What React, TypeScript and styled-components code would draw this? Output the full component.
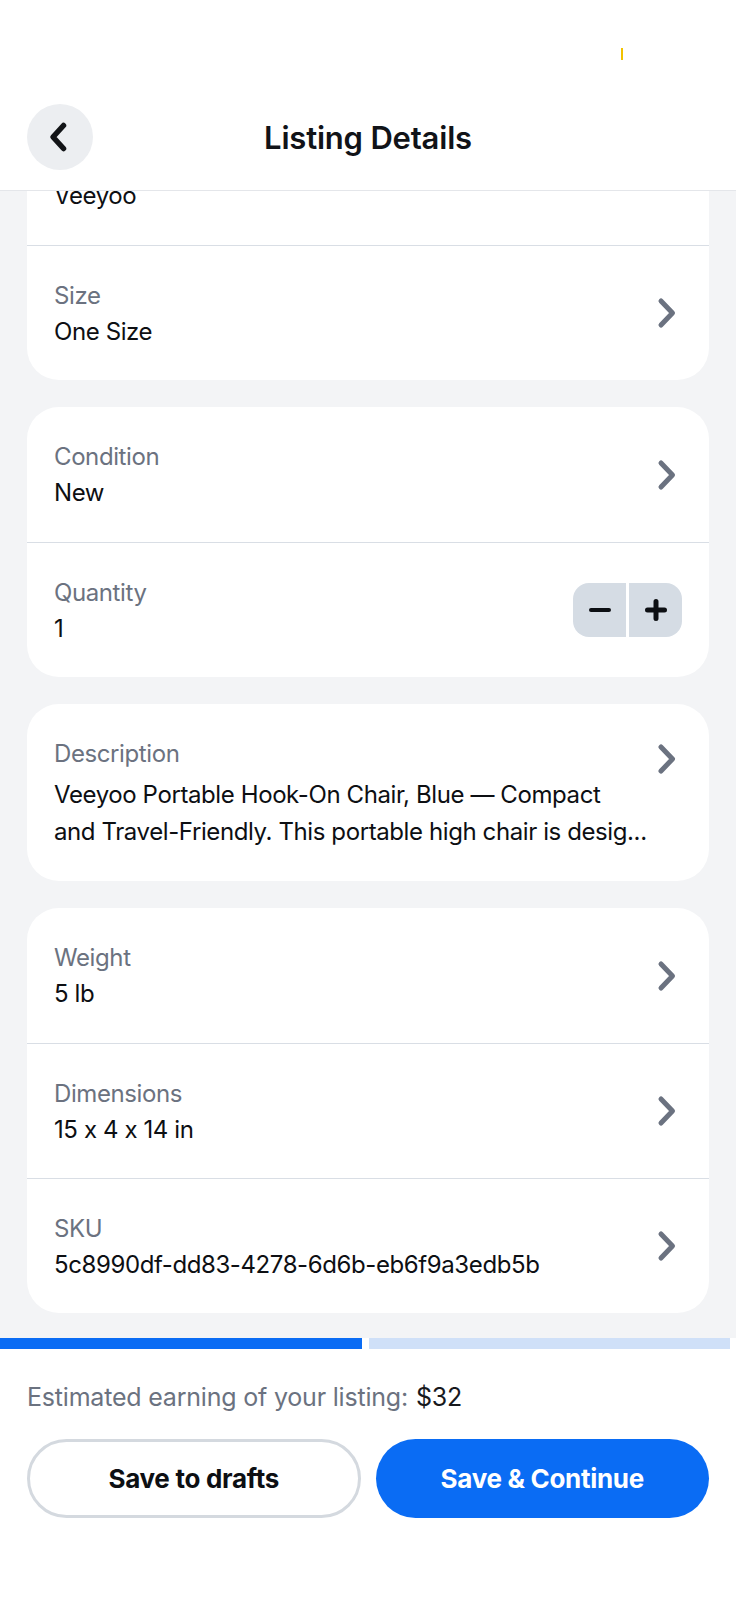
import styled, { createGlobalStyle } from 'styled-components';

const GlobalStyle = createGlobalStyle`
  html, body {
    margin: 0;
    padding: 0;
    background: #ffffff;
  }
  body {
    font-family: Inter, "Noto Sans", "Liberation Sans", sans-serif;
    font-feature-settings: "calt" 0;
    -webkit-font-smoothing: antialiased;
  }
  * { box-sizing: border-box; }
`;

const ScPage = styled.div`
  width: 736px;
  height: 1600px;
  display: flex;
  flex-direction: column;
  background-color: #f3f4f6;
  overflow: hidden;
`;

const ScHeader = styled.header`
  flex: 0 0 191px;
  display: flex;
  flex-direction: column;
  background-color: #ffffff;
  border-bottom: 1px solid #e4e6ea;
  position: relative;
  z-index: 2;
`;

const ScStatusBar = styled.div`
  height: 104px;
  display: flex;
  justify-content: flex-end;
  padding: 48px 113px 0 0;
`;

const ScStatusMark = styled.span`
  width: 2px;
  height: 12px;
  background-color: #f2c200;
`;

const ScNavBar = styled.div`
  display: grid;
  grid-template-columns: 66px 1fr 66px;
  align-items: center;
  padding: 0 27px;
`;

const ScBackButton = styled.button`
  width: 66px;
  height: 66px;
  border: 0;
  padding: 0;
  border-radius: 50%;
  background-color: #eceef1;
  display: flex;
  align-items: center;
  justify-content: center;
  padding-right: 4px;
`;

const ScTitle = styled.h1`
  margin: 0;
  text-align: center;
  font-size: 31px;
  font-weight: 600;
  color: #111318;
  letter-spacing: -0.2px;
`;

const ScScroll = styled.main`
  flex: 1 1 auto;
  overflow: hidden;
`;

const ScList = styled.div`
  margin-top: -81px;
  padding: 0 27px 27px;
  display: flex;
  flex-direction: column;
  gap: 27px;
`;

const ScCard = styled.section`
  background-color: #ffffff;
  border-radius: 32px;
  overflow: hidden;
`;

const ScRow = styled.div<{ $top?: boolean }>`
  display: flex;
  align-items: ${(p) => (p.$top ? 'flex-start' : 'center')};
  justify-content: space-between;
  gap: 20px;
  min-height: 135px;
  padding: ${(p) => (p.$top ? '32px 27px 31px 27px' : '0 27px 0 27px')};

  & + & {
    border-top: 1px solid #d9dee5;
  }
`;

const ScText = styled.div`
  display: flex;
  flex-direction: column;
  min-width: 0;
  letter-spacing: -0.4px;
`;

const ScLabel = styled.div`
  font-size: 24px;
  line-height: 36px;
  color: #6b7280;
`;

const ScValue = styled.div<{ $multi?: boolean }>`
  font-size: 24px;
  line-height: ${(p) => (p.$multi ? '37px' : '35px')};
  margin-top: ${(p) => (p.$multi ? '4px' : '0')};
  color: #0d0f13;
  white-space: nowrap;
`;

const ScChevron = styled.svg<{ $top?: boolean }>`
  flex: 0 0 auto;
  margin-right: 5px;
  margin-top: ${(p) => (p.$top ? '7px' : '0')};
`;

const ScStepper = styled.div`
  display: flex;
  gap: 3px;
`;

const ScStepButton = styled.button<{ $side: 'left' | 'right' }>`
  width: 53px;
  height: 54px;
  border: 0;
  padding: 0;
  background-color: #d5dce4;
  display: flex;
  align-items: center;
  justify-content: center;
  border-radius: ${(p) => (p.$side === 'left' ? '16px 0 0 16px' : '0 16px 16px 0')};
`;

const ScFooter = styled.footer`
  flex: 0 0 262px;
  background-color: #ffffff;
  display: flex;
  flex-direction: column;
`;

const ScProgress = styled.div`
  display: flex;
  gap: 7px;
  padding-right: 6px;
  height: 11px;
`;

const ScProgressPart = styled.div<{ $done?: boolean }>`
  flex: 1;
  background-color: ${(p) => (p.$done ? '#0a6cf4' : '#cfe0f8')};
`;

const ScEarning = styled.div`
  margin: 32px 27px 0;
  font-size: 25px;
  line-height: 32px;
  letter-spacing: -0.2px;
  color: #6b7280;

  > strong {
    font-weight: 400;
    color: #17191d;
    margin-left: 8px;
  }
`;

const ScActions = styled.div`
  display: grid;
  grid-template-columns: 1fr 1fr;
  gap: 15px;
  margin: 26px 27px 0;
`;

const ScActionButton = styled.button<{ $primary?: boolean }>`
  height: 79px;
  border-radius: 40px;
  font-family: inherit;
  font-size: 26px;
  font-weight: 700;
  letter-spacing: -0.3px;
  color: ${(p) => (p.$primary ? '#ffffff' : '#0d0f13')};
  background-color: ${(p) => (p.$primary ? '#0a6cf4' : '#ffffff')};
  border: ${(p) => (p.$primary ? '0' : '3px solid #d4d9df')};
`;

const Chevron = ({ top }: { top?: boolean }) => (
  <ScChevron $top={top} width="20" height="32" viewBox="0 0 20 32" fill="none">
    <path d="M4 4 L15.5 16 L4 28" stroke="#6b7280" strokeWidth="5" strokeLinecap="round" strokeLinejoin="round" />
  </ScChevron>
);

type Field = { label: string; value: string; link?: boolean };

const DetailRow = ({ label, value, link = true }: Field) => (
  <ScRow>
    <ScText>
      <ScLabel>{label}</ScLabel>
      <ScValue>{value}</ScValue>
    </ScText>
    {link && <Chevron />}
  </ScRow>
);

// brand row sits mostly under the header, only its value peeks out
const firstCard: Field[] = [
  { label: 'Brand', value: 'Veeyoo', link: false },
  { label: 'Size', value: 'One Size' },
];

const shippingCard: Field[] = [
  { label: 'Weight', value: '5 lb' },
  { label: 'Dimensions', value: '15 x 4 x 14 in' },
  { label: 'SKU', value: '5c8990df-dd83-4278-6d6b-eb6f9a3edb5b' },
];

export const App = () => {
  return (
    <ScPage>
      <GlobalStyle />
      <ScHeader>
        <ScStatusBar>
          <ScStatusMark />
        </ScStatusBar>
        <ScNavBar>
          <ScBackButton aria-label="Back">
            <svg width="22" height="32" viewBox="0 0 22 32" fill="none">
              <path d="M16.5 4.5 L6 16 L16.5 27.5" stroke="#121417" strokeWidth="5.5" strokeLinecap="round" strokeLinejoin="round" />
            </svg>
          </ScBackButton>
          <ScTitle>Listing Details</ScTitle>
          <span />
        </ScNavBar>
      </ScHeader>

      <ScScroll>
        <ScList>
          <ScCard>
            {firstCard.map((f) => (
              <DetailRow key={f.label} {...f} />
            ))}
          </ScCard>

          <ScCard>
            <DetailRow label="Condition" value="New" />
            <ScRow>
              <ScText>
                <ScLabel>Quantity</ScLabel>
                <ScValue>1</ScValue>
              </ScText>
              <ScStepper>
                <ScStepButton $side="left" aria-label="Decrease">
                  <svg width="22" height="22" viewBox="0 0 22 22">
                    <path d="M2 11 H20" stroke="#0d0f13" strokeWidth="4" strokeLinecap="round" />
                  </svg>
                </ScStepButton>
                <ScStepButton $side="right" aria-label="Increase">
                  <svg width="22" height="22" viewBox="0 0 22 22">
                    <path d="M2.5 11 H19.5 M11 2.5 V19.5" stroke="#0d0f13" strokeWidth="5" strokeLinecap="round" />
                  </svg>
                </ScStepButton>
              </ScStepper>
            </ScRow>
          </ScCard>

          <ScCard>
            <ScRow $top>
              <ScText>
                <ScLabel>Description</ScLabel>
                <ScValue $multi>
                  Veeyoo Portable Hook-On Chair, Blue — Compact
                  <br />
                  and Travel-Friendly. This portable high chair is desig...
                </ScValue>
              </ScText>
              <Chevron top />
            </ScRow>
          </ScCard>

          <ScCard>
            {shippingCard.map((f) => (
              <DetailRow key={f.label} {...f} />
            ))}
          </ScCard>
        </ScList>
      </ScScroll>

      <ScFooter>
        <ScProgress>
          <ScProgressPart $done />
          <ScProgressPart />
        </ScProgress>
        <ScEarning>
          Estimated earning of your listing:<strong>$32</strong>
        </ScEarning>
        <ScActions>
          <ScActionButton>Save to drafts</ScActionButton>
          <ScActionButton $primary>Save &amp; Continue</ScActionButton>
        </ScActions>
      </ScFooter>
    </ScPage>
  );
};

export default App;
